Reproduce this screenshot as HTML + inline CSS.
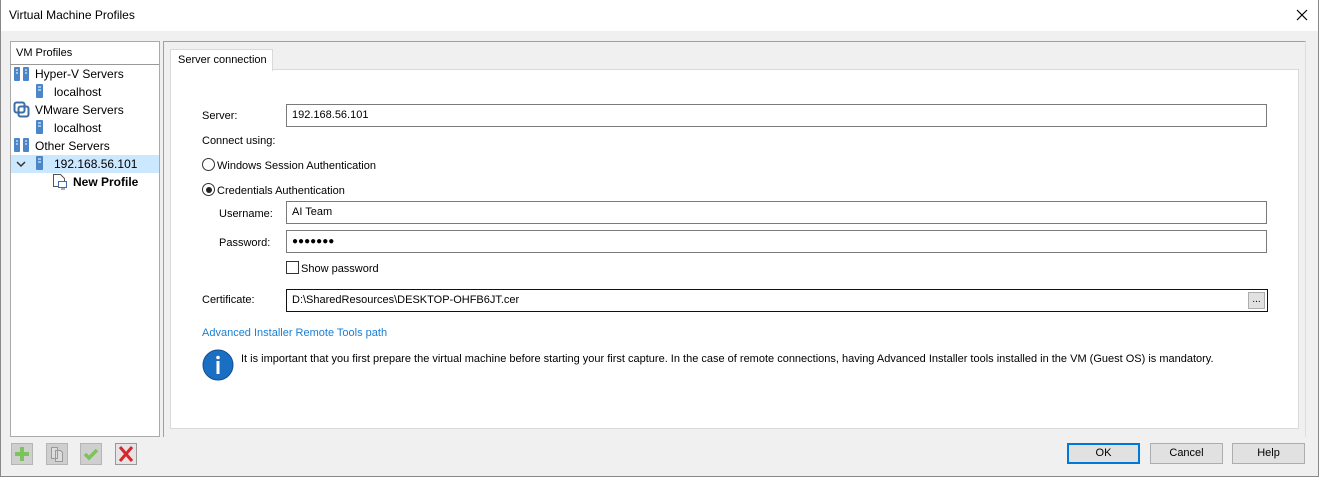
<!DOCTYPE html>
<html><head><meta charset="utf-8"><style>
*{margin:0;padding:0;box-sizing:border-box}
body{width:1319px;height:477px;overflow:hidden;background:#f0f0f0;font-family:"Liberation Sans",sans-serif;font-size:11px;color:#000;position:relative}
.a{position:absolute}
.win{left:0;top:0;width:1319px;height:477px;border:1px solid #888;border-top:none}
.title{left:0;top:0;width:1318px;height:31px;background:#fff}
.inp{position:absolute;background:#fff;border:1px solid #7a7a7a;height:23px;padding:4px 5px;white-space:nowrap}
.radio{position:absolute;width:13px;height:13px;border:1px solid #333;border-radius:50%;background:#fff}
.btn{position:absolute;height:21px;border:1px solid #adadad;background:#e1e1e1;text-align:center;line-height:19px;font-size:11px}
.ti{position:absolute;white-space:nowrap;font-size:12px}
.tb{position:absolute;width:22px;height:22px;background:#cfcfcf;border:1px solid #b5b5b5}
</style></head><body>
<div class="a title"></div>
<div class="a" style="left:9px;top:8px;font-size:12px">Virtual Machine Profiles</div>
<svg class="a" style="left:1296px;top:9px" width="12" height="12"><path d="M1 1L11 11M11 1L1 11" stroke="#000" stroke-width="1.2"/></svg>
<div class="a win"></div>

<div class="a" style="left:10px;top:41px;width:150px;height:396px;background:#fff;border:1px solid #aaa"></div>
<div class="a" style="left:10px;top:41px;width:149px;height:24px;border-bottom:1px solid #999;padding:6px 0 0 6px;font-size:11px">VM Profiles</div>
<div class="a" style="left:11px;top:155px;width:148px;height:18px;background:#cce8ff"></div>
<svg class="a" style="left:14px;top:67px" width="16" height="14"><rect x="0" y="0" width="6" height="14" rx="1" fill="#4a86c8"/><rect x="9" y="0" width="6" height="14" rx="1" fill="#4a86c8"/><path d="M2 3h2M2 6h2M11 3h2M11 6h2" stroke="#fff"/></svg>
<div class="ti" style="left:35px;top:67px">Hyper-V Servers</div>
<svg class="a" style="left:36px;top:84px" width="8" height="14"><rect width="7" height="14" rx="1" fill="#4a86c8"/><path d="M2 3h3M2 6h3" stroke="#fff"/></svg>
<div class="ti" style="left:54px;top:85px">localhost</div>
<svg class="a" style="left:13px;top:101px" width="17" height="17"><rect x="1.5" y="1.5" width="10" height="10" rx="2" fill="none" stroke="#3a6fa8" stroke-width="2"/><rect x="5.5" y="5.5" width="10" height="10" rx="2" fill="none" stroke="#3a6fa8" stroke-width="2"/></svg>
<div class="ti" style="left:35px;top:103px">VMware Servers</div>
<svg class="a" style="left:36px;top:120px" width="8" height="14"><rect width="7" height="14" rx="1" fill="#4a86c8"/><path d="M2 3h3M2 6h3" stroke="#fff"/></svg>
<div class="ti" style="left:54px;top:121px">localhost</div>
<svg class="a" style="left:14px;top:138px" width="16" height="14"><rect x="0" y="0" width="6" height="14" rx="1" fill="#4a86c8"/><rect x="9" y="0" width="6" height="14" rx="1" fill="#4a86c8"/><path d="M2 3h2M2 6h2M11 3h2M11 6h2" stroke="#fff"/></svg>
<div class="ti" style="left:35px;top:139px">Other Servers</div>
<svg class="a" style="left:16px;top:160px" width="10" height="8"><path d="M1 2l4 4l4-4" fill="none" stroke="#333" stroke-width="1.5"/></svg>
<svg class="a" style="left:36px;top:156px" width="8" height="14"><rect width="7" height="14" rx="1" fill="#4a86c8"/><path d="M2 3h3M2 6h3" stroke="#fff"/></svg>
<div class="ti" style="left:54px;top:157px">192.168.56.101</div>
<svg class="a" style="left:52px;top:174px" width="16" height="17"><path d="M1.5 0.5h7l4 4v8h-11z" fill="#fff" stroke="#555"/><rect x="6.5" y="7.5" width="8" height="6" fill="#fff" stroke="#3a6fa8"/><path d="M9 15h4" stroke="#555"/></svg>
<div class="ti" style="left:73px;top:175px;font-weight:bold">New Profile</div>

<div class="a" style="left:163px;top:41px;width:1143px;height:396px;border:1px solid #a0a0a0;border-bottom:none;border-right-color:#ddd"></div>
<div class="a" style="left:170px;top:69px;width:1129px;height:360px;background:#fff;border:1px solid #d9d9d9"></div>
<div class="a" style="left:170px;top:49px;width:103px;height:22px;background:#fff;border:1px solid #d9d9d9;border-bottom:none;padding:4px 0 0 7px">Server connection</div>

<div class="a" style="left:202px;top:110px">Server:</div>
<div class="inp" style="left:286px;top:104px;width:981px">192.168.56.101</div>
<div class="a" style="left:202px;top:135px">Connect using:</div>
<div class="radio" style="left:202px;top:158px"></div>
<div class="a" style="left:217px;top:160px">Windows Session Authentication</div>
<div class="radio" style="left:202px;top:183px"></div>
<div class="a" style="left:205.5px;top:186.5px;width:6px;height:6px;border-radius:50%;background:#222"></div>
<div class="a" style="left:217px;top:185px">Credentials Authentication</div>
<div class="a" style="left:219px;top:208px">Username:</div>
<div class="inp" style="left:286px;top:201px;width:981px">AI Team</div>
<div class="a" style="left:219px;top:237px">Password:</div>
<div class="inp" style="left:286px;top:230px;width:981px;font-size:10px;padding-top:5px;font-weight:bold">&#9679;&#9679;&#9679;&#9679;&#9679;&#9679;&#9679;</div>
<div class="a" style="left:286px;top:261px;width:13px;height:13px;border:1px solid #333;background:#fff"></div>
<div class="a" style="left:301px;top:263px">Show password</div>
<div class="a" style="left:202px;top:294px">Certificate:</div>
<div class="inp" style="left:286px;top:289px;width:982px;height:23px;border-color:#111">D:\SharedResources\DESKTOP-OHFB6JT.cer</div>
<div class="a" style="left:1248px;top:292px;width:17px;height:17px;background:#e1e1e1;border:1px solid #adadad;text-align:center;line-height:13px;font-size:10px">...</div>
<div class="a" style="left:202px;top:327px;color:#1a7fd4">Advanced Installer Remote Tools path</div>
<svg class="a" style="left:202px;top:349px" width="32" height="32"><circle cx="16" cy="16" r="15" fill="#1b6fc2" stroke="#0e4f93"/><rect x="14.5" y="12" width="3" height="13" fill="#fff"/><circle cx="16" cy="8.5" r="1.8" fill="#fff"/></svg>
<div class="a" style="left:241px;top:353px;white-space:nowrap">It is important that you first prepare the virtual machine before starting your first capture. In the case of remote connections, having Advanced Installer tools installed in the VM (Guest OS) is mandatory.</div>

<div class="tb" style="left:11px;top:443px"><svg width="20" height="20"><path d="M10 3v14M3 10h14" stroke="#7dc35b" stroke-width="4"/></svg></div>
<div class="tb" style="left:46px;top:443px"><svg width="20" height="20"><path d="M4.5 3.5h6v11h-6z M8.5 6.5h5l2 2v9h-7z" fill="#ddd" stroke="#999"/></svg></div>
<div class="tb" style="left:80px;top:443px"><svg width="20" height="20"><path d="M4 10l4 4l8-8" fill="none" stroke="#7dc35b" stroke-width="3.5"/></svg></div>
<div class="tb" style="left:115px;top:443px;background:#e4e4e4;border-color:#999"><svg width="20" height="20"><path d="M4 3l12 14M16 3L4 17" stroke="#d9262a" stroke-width="3"/></svg></div>

<div class="btn" style="left:1067px;top:443px;width:73px;border:2px solid #0078d7;line-height:17px">OK</div>
<div class="btn" style="left:1150px;top:443px;width:73px">Cancel</div>
<div class="btn" style="left:1232px;top:443px;width:73px">Help</div>
</body></html>
